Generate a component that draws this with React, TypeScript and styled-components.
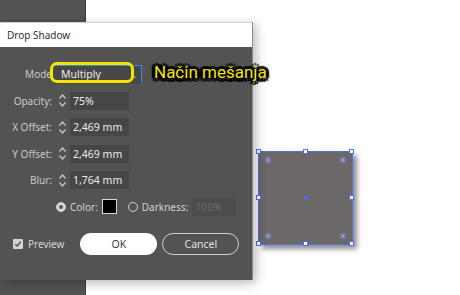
import styled, { createGlobalStyle } from 'styled-components'

const GlobalStyle = createGlobalStyle`
  html, body {
    margin: 0;
    padding: 0;
    background: #ffffff;
  }
  * {
    box-sizing: border-box;
  }
`

const Screen = styled.div`
  width: 460px;
  height: 295px;
  position: relative;
  overflow: hidden;
  display: flex;
  background: #ffffff;
  font-family: "Noto Sans", "Open Sans", sans-serif;
`

const ToolPanel = styled.div`
  width: 86px;
  height: 100%;
  background: #535353;
  border-right: 1px solid #3b3b3b;
  flex-shrink: 0;
`

const Canvas = styled.div`
  flex: 1;
  position: relative;
  background: #ffffff;
`

const Dialog = styled.div`
  position: absolute;
  left: 0;
  top: 22px;
  width: 253px;
  height: 258px;
  display: flex;
  flex-direction: column;
  border-right: 1px solid #8a8a8a;
  box-shadow: 3px 3px 10px rgba(0, 0, 0, 0.28);
`

const TitleBar = styled.div`
  height: 25px;
  background: #ffffff;
  color: #2f2f2f;
  font-size: 10px;
  display: flex;
  align-items: center;
  padding-left: 7px;
  border-top: 1px solid #d0d0d0;
`

const Body = styled.div`
  flex: 1;
  background: #535353;
  padding-top: 17px;
  display: flex;
  flex-direction: column;
  gap: 6.5px;
`

const Row = styled.div`
  height: 20px;
  display: flex;
  align-items: center;
  position: relative;
`

const Label = styled.span`
  width: 52px;
  text-align: right;
  color: #c9c9c9;
  font-size: 10px;
  white-space: nowrap;
`

const Dropdown = styled.div`
  margin-left: 1px;
  width: 89px;
  height: 19px;
  background: #474747;
  border: 1px solid #3f86d6;
  border-left-color: #4a4a4a;
  border-bottom-color: #4a4a4a;
  color: #ececec;
  font-size: 10.5px;
  display: flex;
  align-items: center;
  justify-content: space-between;
  padding: 0 3px 0 7px;
  position: relative;
`

const Caret = styled.span`
  color: #b9b9b9;
  font-size: 8px;
  margin-top: 1px;
`

const Highlight = styled.div`
  position: absolute;
  left: 50px;
  top: -2px;
  width: 84px;
  height: 21px;
  border: 3px solid #f4e600;
  border-radius: 7px;
  pointer-events: none;
`

const Spinner = styled.svg`
  width: 9px;
  height: 15px;
  margin-left: 6px;
  margin-right: 3px;
`

const Field = styled.div<{ $dim?: boolean; $w?: number }>`
  width: ${p => p.$w ?? 59}px;
  height: 18px;
  background: ${p => (p.$dim ? '#4d4d4d' : '#464646')};
  color: ${p => (p.$dim ? '#6c6c6c' : '#ececec')};
  font-size: 10.5px;
  display: flex;
  align-items: center;
  padding-left: 3px;
`

const ColorRow = styled(Row)`
  padding-left: 56px;
`

const Radio = styled.span<{ $on?: boolean }>`
  width: 10px;
  height: 10px;
  border-radius: 50%;
  border: 1px solid #cfcfcf;
  background: ${p => (p.$on ? '#d6d6d6' : 'transparent')};
  display: inline-flex;
  align-items: center;
  justify-content: center;
  &::after {
    content: "";
    width: 4px;
    height: 4px;
    border-radius: 50%;
    background: ${p => (p.$on ? '#5a5a5a' : 'transparent')};
  }
`

const OptionText = styled.span`
  color: #d0d0d0;
  font-size: 10px;
  margin-left: 4px;
`

const Swatch = styled.span`
  width: 15px;
  height: 15px;
  background: #000000;
  border: 1px solid #d8d8d8;
  margin-left: 4px;
  margin-right: 11px;
`

const DarkField = styled(Field)`
  margin-left: 4px;
`

const ButtonRow = styled.div`
  margin-top: 10px;
  height: 22px;
  display: flex;
  align-items: center;
  padding-left: 13px;
`

const Check = styled.span`
  width: 10px;
  height: 10px;
  background: #d4d4d4;
  border-radius: 1px;
  display: inline-flex;
  align-items: center;
  justify-content: center;
`

const PreviewText = styled.span`
  color: #d4d4d4;
  font-size: 10px;
  margin-left: 5px;
  margin-right: 16px;
`

const PillButton = styled.button<{ $primary?: boolean }>`
  width: 77px;
  height: 22px;
  border-radius: 11px;
  font-family: inherit;
  font-size: 10.5px;
  padding: 0;
  margin-right: 5px;
  background: ${p => (p.$primary ? '#ffffff' : 'transparent')};
  color: ${p => (p.$primary ? '#3a3a3a' : '#e2e2e2')};
  border: ${p => (p.$primary ? 'none' : '1.5px solid #cfcfcf')};
`

const Callout = styled.div`
  position: absolute;
  left: 154px;
  top: 62px;
  font-family: Roboto, "Noto Sans", sans-serif;
  font-size: 17px;
  color: #f4e600;
  white-space: nowrap;
  text-shadow:
    -3.5px 0 1px #000, 3.5px 0 1px #000, 0 -3.5px 1px #000, 0 3.5px 1px #000,
    -2.5px -2.5px 1px #000, 2.5px -2.5px 1px #000, -2.5px 2.5px 1px #000, 2.5px 2.5px 1px #000,
    0 0 2px #000;
`

const Shape = styled.div`
  position: absolute;
  left: 172px;
  top: 151px;
  width: 95px;
  height: 94px;
  background: #6c6868;
  border: 1px solid #4f6ef0;
  box-shadow: 4px 4px 5px rgba(0, 0, 0, 0.45);
`

const Handle = styled.span<{ $x: number; $y: number }>`
  position: absolute;
  left: ${p => p.$x}%;
  top: ${p => p.$y}%;
  width: 5px;
  height: 5px;
  margin: -3px 0 0 -3px;
  background: #ffffff;
  border: 1px solid #4f6ef0;
`

const Widget = styled.span<{ $x: number; $y: number }>`
  position: absolute;
  left: ${p => p.$x}px;
  top: ${p => p.$y}px;
  width: 6px;
  height: 6px;
  border-radius: 50%;
  border: 1px solid #7f93f2;
  background: #6c6868;
  &::after {
    content: "";
    position: absolute;
    left: 1px;
    top: 1px;
    width: 2px;
    height: 2px;
    border-radius: 50%;
    background: #b9c4f7;
  }
`

const CenterDot = styled.span`
  position: absolute;
  left: 50%;
  top: 50%;
  width: 4px;
  height: 4px;
  margin: -2px 0 0 -2px;
  border-radius: 50%;
  background: #4f6ef0;
`

const SpinIcon = () => (
  <Spinner viewBox="0 0 9 15">
    <path d="M1.5 5.5 L4.5 2 L7.5 5.5" fill="none" stroke="#c9c9c9" strokeWidth="1.2" />
    <path d="M1.5 9.5 L4.5 13 L7.5 9.5" fill="none" stroke="#c9c9c9" strokeWidth="1.2" />
  </Spinner>
)

const fields = [
  { label: 'Opacity:', value: '75%' },
  { label: 'X Offset:', value: '2,469 mm' },
  { label: 'Y Offset:', value: '2,469 mm' },
  { label: 'Blur:', value: '1,764 mm' },
]

const handles = [
  [0, 0], [50, 0], [100, 0],
  [0, 50], [100, 50],
  [0, 100], [50, 100], [100, 100],
]

export default function App() {
  return (
    <>
      <GlobalStyle />
      <Screen>
        <ToolPanel />
        <Canvas>
          <Shape>
            {handles.map(([x, y]) => (
              <Handle key={`${x}-${y}`} $x={x} $y={y} />
            ))}
            <Widget $x={6} $y={5} />
            <Widget $x={81} $y={5} />
            <Widget $x={6} $y={81} />
            <Widget $x={81} $y={81} />
            <CenterDot />
          </Shape>
        </Canvas>

        <Dialog>
          <TitleBar>Drop Shadow</TitleBar>
          <Body>
            <Row>
              <Label>Mode</Label>
              <Dropdown>
                Multiply
                <Caret>⌄</Caret>
              </Dropdown>
              <Highlight />
            </Row>
            {fields.map(f => (
              <Row key={f.label}>
                <Label>{f.label}</Label>
                <SpinIcon />
                <Field>{f.value}</Field>
              </Row>
            ))}
            <ColorRow>
              <Radio $on />
              <OptionText>Color:</OptionText>
              <Swatch />
              <Radio />
              <OptionText>Darkness:</OptionText>
              <DarkField $dim $w={44}>100%</DarkField>
            </ColorRow>
            <ButtonRow>
              <Check>
                <svg width="8" height="8" viewBox="0 0 8 8">
                  <path d="M1.2 4.2 L3.2 6 L6.8 1.8" fill="none" stroke="#4a4a4a" strokeWidth="1.4" />
                </svg>
              </Check>
              <PreviewText>Preview</PreviewText>
              <PillButton $primary>OK</PillButton>
              <PillButton>Cancel</PillButton>
            </ButtonRow>
          </Body>
        </Dialog>

        <Callout>Način mešanja</Callout>
      </Screen>
    </>
  )
}
